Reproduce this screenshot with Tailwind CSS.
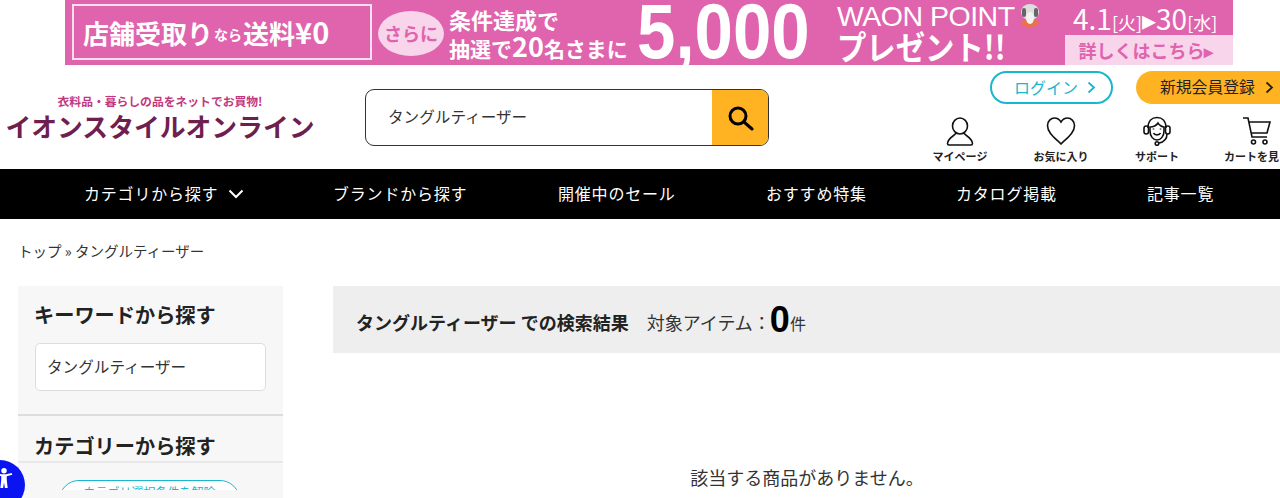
<!DOCTYPE html>
<html lang="ja"><head><meta charset="utf-8"><script src="https://cdn.jsdelivr.net/npm/@tailwindcss/browser@4"></script></head>
<body class="bg-white">
<div class="relative w-[1280px] h-[498px] overflow-hidden bg-white text-[#222] font-['Noto_Sans_CJK_JP','Noto_Sans',sans-serif]">
  <!-- banner -->
  <div class="pl-[65px] h-[65px]">
    <div class="relative w-[1168px] h-[65px] overflow-hidden bg-[#e063ae] text-white font-bold whitespace-nowrap">
      <div class="absolute left-[7px] top-[4px] w-[300px] h-[56px] border-2 border-white/80 flex items-center pl-[9px] text-[26px]"><span>店舗受取り</span><span class="text-[14px] mt-[4px] mx-[1px]">なら</span><span>送料</span><span class="text-[29px]">¥0</span></div>
      <div class="absolute left-[313px] top-[11px] w-[66px] h-[45px] rounded-[50%] bg-[#f8d5ea] text-[#e063ae] flex items-center justify-center text-[18px]">さらに</div>
      <div class="absolute left-[384px] top-[6px] text-[22px] leading-[26px]">条件達成で</div>
      <div class="absolute left-[384px] top-[31px] text-[21px] leading-[30px]">抽選で<span class="text-[27px]">20</span>名さまに</div>
      <div class="absolute left-[572px] top-[-15px] origin-left scale-x-[0.885] text-[78px] leading-[92px] font-['Liberation_Sans',sans-serif]">5,000</div>
      <div class="absolute left-[772px] top-[1px] text-[28.500px] leading-[30px] font-normal font-['Liberation_Sans',sans-serif] tracking-[-0.5px]">WAON POINT</div>
      <div class="absolute left-[772px] top-[26px] origin-left scale-x-[0.89] text-[33px] leading-[40px]">プレゼント!!</div>
      <svg class="absolute left-[953px] top-[2px]" width="24" height="26" viewBox="0 0 24 26"><ellipse cx="12" cy="21" rx="9" ry="4" fill="#e8734a"/><ellipse cx="12" cy="10" rx="9" ry="8" fill="#ddd"/><rect x="4" y="6" width="4" height="9" rx="2" fill="#666"/><rect x="16" y="6" width="4" height="9" rx="2" fill="#666"/><ellipse cx="12" cy="16" rx="4" ry="6" fill="#f2f2f2"/></svg>
      <div class="absolute left-[1008px] top-[1px] text-[28px] leading-[34px] font-normal">4.1<span class="text-[18px]">[火]</span>▸30<span class="text-[18px]">[水]</span></div>
      <div class="absolute left-[1000px] top-[35px] w-[168px] h-[30px] bg-[#f8d5ea] text-[#e063ae] flex items-center justify-center pr-[6px] text-[18px]">詳しくはこちら▸</div>
    </div>
  </div>
  <!-- header -->
  <header class="flex h-[104px] items-start">
    <div class="w-[320px] shrink-0 pt-[28px] flex flex-col items-center">
      <div class="text-[11.800px] leading-[16px] font-bold text-[#c2387f] whitespace-nowrap">衣料品・暮らしの品をネットでお買物!</div>
      <div class="text-[25.800px] leading-[34px] font-bold text-[#6f1f4f] whitespace-nowrap">イオンスタイルオンライン</div>
    </div>
    <div class="ml-[45px] mt-[24px] w-[404px] h-[57px] shrink-0 flex border border-[#333] rounded-[9px] overflow-hidden">
      <div class="flex-1 flex items-center pl-[22px] pb-[1px] text-[15.600px] text-[#333]">タングルティーザー</div>
      <div class="w-[56px] bg-[#ffb222] flex items-center justify-center">
        <svg width="28" height="28" viewBox="0 0 28 28" fill="none" stroke="#000" stroke-width="3" stroke-linecap="round"><circle cx="12" cy="12" r="8"/><path d="M18 18l8 7"/></svg>
      </div>
    </div>
    <div class="ml-[141px] shrink-0 w-[370px] pt-[6px]">
      <div class="flex gap-[23px] pl-[80px]">
        <div class="w-[123px] h-[33px] shrink-0 rounded-full border-2 border-[#19b6cf] flex items-center justify-center gap-[9px] pl-[7px] pb-[2px] text-[16px] text-[#19b6cf]"><span>ログイン</span><svg class="mt-[2px]" width="9" height="13" viewBox="0 0 9 13" fill="none" stroke="currentColor" stroke-width="1.8"><path d="M1.500 1.500l5.500 5-5.500 5"/></svg></div>
        <div class="w-[160px] h-[33px] shrink-0 rounded-l-full bg-[#ffb222] flex items-center pl-[24px] pb-[2px] gap-[10px] text-[15.800px] text-[#222] whitespace-nowrap"><span>新規会員登録</span><svg class="mt-[2px]" width="9" height="13" viewBox="0 0 9 13" fill="none" stroke="currentColor" stroke-width="1.8"><path d="M1.500 1.500l5.500 5-5.500 5"/></svg></div>
      </div>
      <div class="flex mt-[12px] text-[11px] leading-[16px] font-bold text-[#222] whitespace-nowrap">
        <div class="w-[100px] flex flex-col items-center">
          <svg width="30" height="30" viewBox="0 0 30 30" fill="none" stroke="#111" stroke-width="1.6"><ellipse cx="15" cy="10" rx="7.500" ry="8"/><path d="M11 17c-1 3-8 4-8.500 10.500c0 1 .5 1.500 1.500 1.500h22c1 0 1.500-.5 1.500-1.500c-.5-6.500-7.500-7.500-8.500-10.500"/></svg>
          <span class="mt-[2px]">マイページ</span>
        </div>
        <div class="w-[102px] flex flex-col items-center">
          <svg width="30" height="30" viewBox="0 0 30 30" fill="none" stroke="#111" stroke-width="1.6"><path d="M15 28C9 22 1.500 17 1.500 9.500C1.500 5 5 2 8.500 2C11.500 2 13.500 3.500 15 6C16.500 3.500 18.500 2 21.500 2C25 2 28.500 5 28.500 9.500C28.500 17 21 22 15 28Z"/></svg>
          <span class="mt-[2px]">お気に入り</span>
        </div>
        <div class="w-[90px] flex flex-col items-center">
          <svg width="30" height="30" viewBox="0 0 30 30" fill="none" stroke="#111" stroke-width="1.600"><path d="M6 12C6 5 10 1.500 15 1.500S24 5 24 12"/><path d="M8 11c3 0 6-1 8-4c1 2 4 4 6 4v4c0 5-3 9-7 9s-7-4-7-9z"/><rect x="2" y="10" width="4.500" height="8" rx="2.200"/><rect x="23.500" y="10" width="4.500" height="8" rx="2.200"/><path d="M11.500 17c1 2.500 6 2.500 7 0M25 18c0 5-3 8-8 9"/><circle cx="15" cy="27.500" r="1.800"/><path d="M11.500 12.500v1M18.500 12.500v1"/></svg>
          <span class="mt-[2px]">サポート</span>
        </div>
        <div class="w-[78px] pl-[22px] flex flex-col items-start">
          <svg class="ml-[18px]" width="30" height="30" viewBox="0 0 30 30" fill="none" stroke="#111" stroke-width="1.600"><path d="M1 2h5l4 19h15M7 6h21l-3 11H9.500"/><circle cx="11.500" cy="26" r="2"/><circle cx="23" cy="26" r="2"/></svg>
          <span class="mt-[2px]">カートを見る</span>
        </div>
      </div>
    </div>
  </header>
  <!-- nav -->
  <nav class="h-[50px] bg-black text-white text-[16px] tracking-[0.8px] flex items-center whitespace-nowrap pl-[84px] pb-[3px]">
    <span class="w-[249px] flex items-center gap-[10px]">カテゴリから探す<svg class="mt-[2px]" width="16" height="10" viewBox="0 0 16 10" fill="none" stroke="#fff" stroke-width="2"><path d="M1.500 1.500L8 8l6.500-6.500"/></svg></span>
    <span class="w-[225px]">ブランドから探す</span>
    <span class="w-[208px]">開催中のセール</span>
    <span class="w-[190px]">おすすめ特集</span>
    <span class="w-[191px]">カタログ掲載</span>
    <span>記事一覧</span>
  </nav>
  <div class="pl-[18px] pt-[23px] h-[67px] text-[14.500px] leading-[18px] text-[#333]">トップ » タングルティーザー</div>
  <!-- content -->
  <div class="flex pl-[18px] gap-[50px]">
    <aside class="relative w-[265px] h-[300px] shrink-0 bg-[#f7f7f7]">
      <div class="h-[130px] px-[17px] pt-[15px] border-b-2 border-[#ddd]">
        <div class="-ml-[1px] text-[20.200px] leading-[28px] font-bold text-[#222]">キーワードから探す</div>
        <div class="mt-[14px] h-[48px] border border-[#ddd] rounded-[5px] bg-white flex items-center pl-[11px] text-[15.600px] text-[#333]">タングルティーザー</div>
      </div>
      <div class="px-[16px] pt-[16px]">
        <div class="text-[20.200px] leading-[28px] font-bold text-[#222]">カテゴリーから探す</div>
      </div>
      <div class="absolute left-0 right-0 top-[175px] h-[29px] overflow-hidden border-t-2 border-[#e8e8e8] pl-[41px]">
        <div class="mt-[17px] w-[181px] h-[40px] rounded-[20px] border border-[#19b6cf] bg-white text-[12px] text-[#19b6cf] text-center pt-[2px]">カテゴリ選択条件を解除</div>
      </div>
    </aside>
    <main class="flex-1 min-w-0">
      <div class="h-[67px] bg-[#eeeeee] flex items-center pl-[23px] pt-[5px] whitespace-nowrap">
        <span class="text-[18px] font-bold text-[#222]">タングルティーザー での検索結果</span>
        <span class="ml-[18px] text-[18px] text-[#333]">対象アイテム：</span>
        <span class="-ml-[1px] mb-[5px] text-[36px] leading-[40px] font-bold text-black font-['Liberation_Sans',sans-serif]">0</span>
        <span class="text-[16px] text-[#333] mt-[2px]">件</span>
      </div>
      <p class="mt-[111px] text-[18px] leading-[26px] text-[#333] text-center w-[948px]">該当する商品がありません。</p>
    </main>
  </div>
  <!-- accessibility button -->
  <div class="absolute left-[-25px] top-[460px] w-[50px] h-[50px] rounded-full bg-[#0a14f0] flex items-start justify-center pt-[7px]">
    <svg class="ml-[8px]" width="22" height="22" viewBox="0 0 22 24" fill="#fff"><circle cx="11" cy="4" r="3"/><path d="M2 8.500l6 1.500v4l-1 9h3l1-6 1 6h3l-1-9v-4l6-1.500-.6-2-6 1.500h-4.800l-6-1.500z"/></svg>
  </div>
</div>
</body></html>
